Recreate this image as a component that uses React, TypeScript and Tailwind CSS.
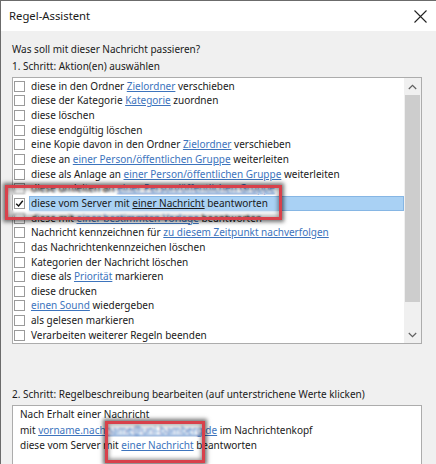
import React from 'react';

type Seg = { t: string; link?: boolean };

const rows: Seg[][] = [
  [{ t: 'diese in den Ordner ' }, { t: 'Zielordner', link: true }, { t: ' verschieben' }],
  [{ t: 'diese der Kategorie ' }, { t: 'Kategorie', link: true }, { t: ' zuordnen' }],
  [{ t: 'diese löschen' }],
  [{ t: 'diese endgültig löschen' }],
  [{ t: 'eine Kopie davon in den Ordner ' }, { t: 'Zielordner', link: true }, { t: ' verschieben' }],
  [{ t: 'diese an ' }, { t: 'einer Person/öffentlichen Gruppe', link: true }, { t: ' weiterleiten' }],
  [{ t: 'diese als Anlage an ' }, { t: 'einer Person/öffentlichen Gruppe', link: true }, { t: ' weiterleiten' }],
  [{ t: 'diese umleiten an ' }, { t: 'einer Person/öffentlichen Gruppe', link: true }],
  [{ t: 'diese vom Server mit ' }, { t: 'einer Nachricht', link: true }, { t: ' beantworten' }],
  [{ t: 'diese mit ' }, { t: 'einer bestimmten Vorlage', link: true }, { t: ' beantworten' }],
  [{ t: 'Nachricht kennzeichnen für ' }, { t: 'zu diesem Zeitpunkt nachverfolgen', link: true }],
  [{ t: 'das Nachrichtenkennzeichen löschen' }],
  [{ t: 'Kategorien der Nachricht löschen' }],
  [{ t: 'diese als ' }, { t: 'Priorität', link: true }, { t: ' markieren' }],
  [{ t: 'diese drucken' }],
  [{ t: 'einen Sound', link: true }, { t: ' wiedergeben' }],
  [{ t: 'als gelesen markieren' }],
  [{ t: 'Verarbeiten weiterer Regeln beenden' }],
];

const SELECTED = 8;

function Row({ segs, selected }: { segs: Seg[]; selected?: boolean }) {
  return (
    <div className="flex items-center h-[14.65px]">
      <div className="w-[16px] flex justify-end pr-[4px] shrink-0">
        <div className="w-[11px] h-[11px] border border-[#9a9a9a] bg-white flex items-center justify-center">
          {selected && (
            <svg width="9" height="9" viewBox="0 0 9 9">
              <path d="M1.2 4.7 L3.6 7 L7.8 1.8" fill="none" stroke="#111" strokeWidth="1.4" />
            </svg>
          )}
        </div>
      </div>
      <div
        className={
          selected
            ? 'flex-1 h-full flex items-center pl-[1px] bg-[#a9d1f4] border border-[#86b6e4] whitespace-nowrap'
            : 'flex-1 h-full flex items-center pl-[1px] whitespace-nowrap border border-transparent'
        }
      >
        <span>
          {segs.map((s, i) =>
            s.link ? (
              <span key={i} className={selected ? 'underline text-[#1a1a1a]' : 'underline text-[#3d74bd]'}>
                {s.t}
              </span>
            ) : (
              <span key={i}>{s.t}</span>
            )
          )}
        </span>
      </div>
    </div>
  );
}

export default function App() {
  return (
    <div
      className="relative w-[436px] h-[464px] overflow-hidden bg-[#f0f0f0] border-l border-t border-[#6b6b6b] text-[#1a1a1a]"
      style={{ fontFamily: '"Noto Sans", "Open Sans", sans-serif' }}
    >
      {/* title bar */}
      <div className="h-[30px] bg-white flex items-center justify-between pl-[8px] pr-[8px]">
        <span className="text-[11.3px]">Regel-Assistent</span>
        <svg width="13" height="13" viewBox="0 0 13 13" className="mr-[1px]">
          <path d="M0.5 0.5 L12.5 12.5 M12.5 0.5 L0.5 12.5" stroke="#222" strokeWidth="1.1" />
        </svg>
      </div>

      <div className="pl-[11px] pr-[14px] text-[10px]">
        <div className="pt-[10px] leading-[17px]">Was soll mit dieser Nachricht passieren?</div>
        <div className="leading-[17px]">1. Schritt: Aktion(en) auswählen</div>

        {/* action list */}
        <div className="mt-[2px] h-[267px] bg-white border border-[#acacac] flex">
          <div className="flex-1 pt-[1px] overflow-hidden">
            {rows.map((r, i) => (
              <Row key={i} segs={r} selected={i === SELECTED} />
            ))}
          </div>
          <div className="w-[17px] bg-[#f0f0f0] flex flex-col items-center">
            <div className="h-[17px] flex items-center justify-center">
              <svg width="9" height="6" viewBox="0 0 9 6">
                <path d="M0.8 5 L4.5 1.3 L8.2 5" fill="none" stroke="#606060" strokeWidth="1.2" />
              </svg>
            </div>
            <div className="w-[15px] h-[207px] bg-[#cdcdcd]" />
            <div className="flex-1" />
            <div className="h-[17px] flex items-center justify-center">
              <svg width="9" height="6" viewBox="0 0 9 6">
                <path d="M0.8 1 L4.5 4.7 L8.2 1" fill="none" stroke="#606060" strokeWidth="1.2" />
              </svg>
            </div>
          </div>
        </div>

        <div className="mt-[42px] leading-[17px]">
          2. Schritt: Regelbeschreibung bearbeiten (auf unterstrichene Werte klicken)
        </div>
        <div className="mt-[2px] h-[80px] bg-white border border-[#acacac] pl-[7px] pt-[1px] leading-[15.5px]">
          <div>Nach Erhalt einer Nachricht</div>
          <div>
            mit <span className="underline text-[#3d74bd]">vorname.nachname@uni-bamberg.de</span> im Nachrichtenkopf
          </div>
          <div>
            diese vom Server mit <span className="underline text-[#3d74bd]">einer Nachricht</span> beantworten
          </div>
        </div>
      </div>

      {/* highlight callouts */}
      <div className="absolute left-[4px] top-[184px] w-[277px] h-[35px] border-[3px] border-[#d8414b] shadow-[0_0_4px_2px_rgba(0,0,0,0.55),inset_0_0_4px_1px_rgba(0,0,0,0.45)]">
        <div className="absolute left-0 right-0 top-0 h-[7px] backdrop-blur-[1px]" />
        <div className="absolute left-0 right-0 bottom-0 h-[7px] backdrop-blur-[1px]" />
      </div>
      <div className="absolute left-[104px] top-[420px] w-[100px] h-[42px] border-[3px] border-[#d8414b] shadow-[0_0_4px_2px_rgba(0,0,0,0.55),inset_0_0_4px_1px_rgba(0,0,0,0.45)]">
        <div className="absolute left-0 right-0 top-0 h-[13px] backdrop-blur-[1px]" />
      </div>
    </div>
  );
}
